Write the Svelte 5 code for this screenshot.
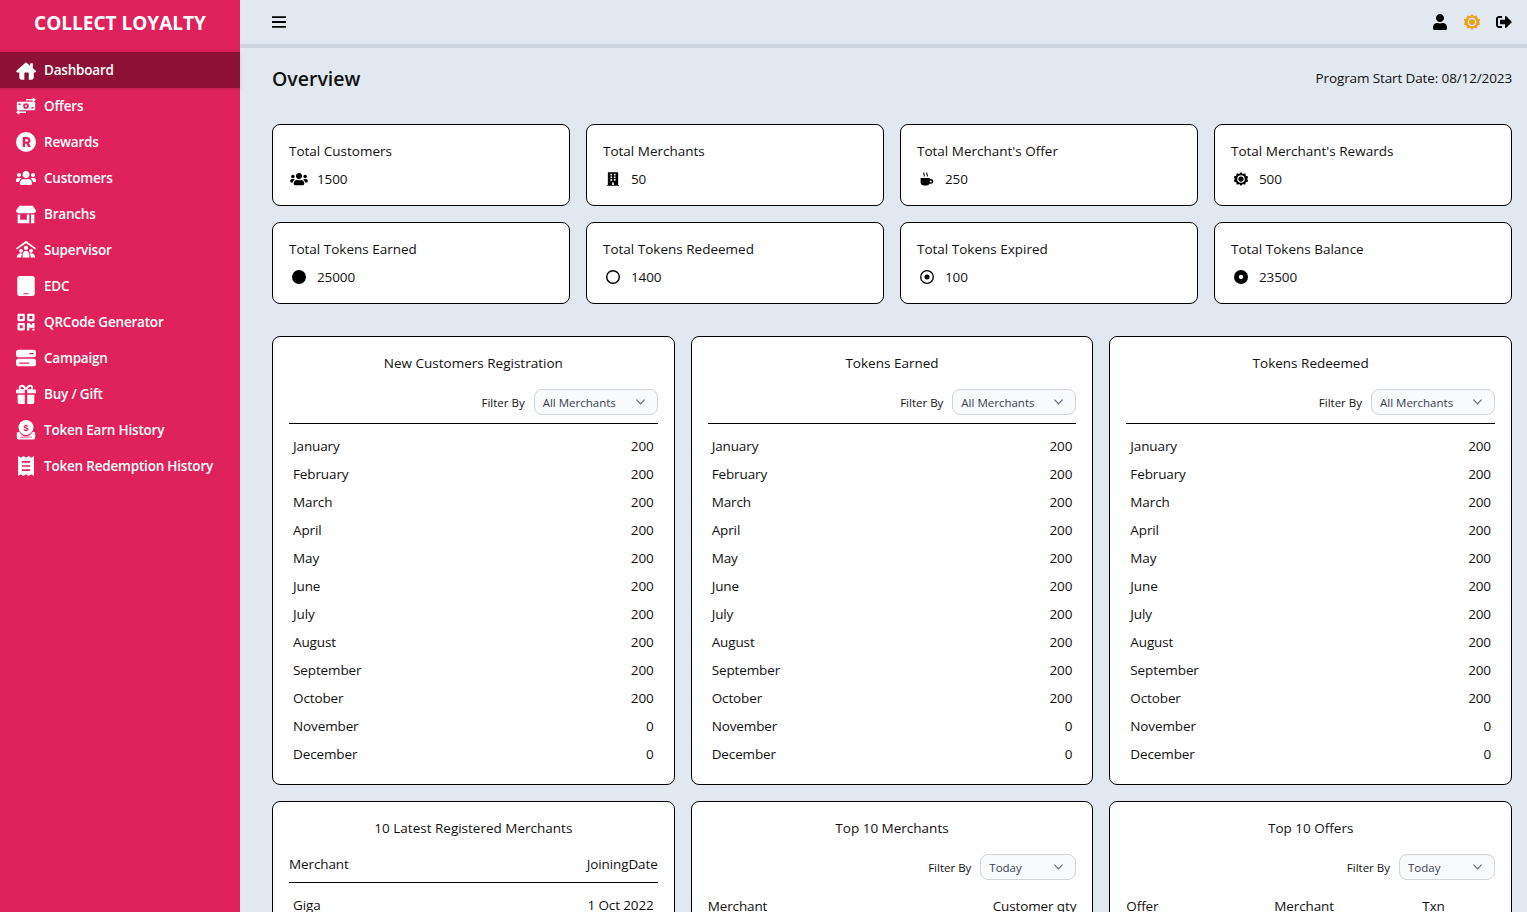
<script>
  const icons = {
    home: ['0 0 576 512', '<path d="M288 28c9 0 17 3 24 9l94 82V60c0-9 7-16 16-16h48c9 0 16 7 16 16v128l78 68c8 7 12 16 12 24 0 18-15 32-32 32h-32v144c0 35-29 64-64 64h-80V344c0-18-14-32-32-32h-64c-18 0-32 14-32 32v176h-80c-35 0-64-29-64-64V312H40c-18 0-32-14-32-32 0-8 4-17 12-24L264 37c7-6 15-9 24-9z"/>'],
    offers: ['0 0 24 24', '<rect x="1" y="7" width="22" height="10" rx="1"/><circle cx="12" cy="12" r="3.400" fill="#e0225c"/><circle cx="12" cy="12" r="1.200"/><rect x="3" y="9" width="2.500" height="1.800" fill="#e0225c"/><rect x="18.500" y="13.200" width="2.500" height="1.800" fill="#e0225c"/><path d="M12 3.700h8V1.500l4 3-4 3V5.300h-8zM12 20.300H4v2.200l-4-3 4-3v2.200h8z"/>'],
    rewards: ['0 0 24 24', '<circle cx="12" cy="12" r="12"/><path fill="#e0225c" fill-rule="evenodd" d="M8 6h5.500a4 4 0 0 1 2 7.400L18 18h-3.400l-2.200-4H11v4H8zm3 2.600V11.500h2.300a1.450 1.450 0 0 0 0-2.900z"/>'],
    users: ['0 0 640 512', '<path d="M96 224c35.300 0 64-28.700 64-64s-28.700-64-64-64-64 28.700-64 64 28.700 64 64 64zm448 0c35.300 0 64-28.700 64-64s-28.700-64-64-64-64 28.700-64 64 28.700 64 64 64zm32 32h-64c-17.600 0-33.500 7.100-45.100 18.600 40.300 22.100 68.900 62 75.100 109.400h66c17.700 0 32-14.300 32-32v-32c0-35.300-28.700-64-64-64zm-256 0c61.900 0 112-50.100 112-112S381.900 32 320 32 208 82.100 208 144s50.100 112 112 112zm76.800 32h-8.300c-20.800 10-43.900 16-68.500 16s-47.600-6-68.500-16h-8.300C179.600 288 128 339.600 128 403.200V432c0 26.500 21.500 48 48 48h288c26.500 0 48-21.500 48-48v-28.800c0-63.600-51.600-115.200-115.200-115.200zm-223.700-13.400C161.500 263.100 145.600 256 128 256H64c-35.300 0-64 28.700-64 64v32c0 17.700 14.300 32 32 32h65.900c6.300-47.400 34.900-87.300 75.200-109.400z"/>'],
    store: ['0 0 24 24', '<path d="M4 2h16l3.800 5.500c.4 2-.8 3.500-2.800 3.500H3C1 11-.2 9.500.2 7.500z"/><path d="M2 12.500h3V19h8v-6.500h3V23H2zM18 12.500h4V23h-4z"/>'],
    supervisor: ['0 0 24 24', '<path d="M12 1L0 10l1 1.500L12 4l11 7.500 1-1.500z"/><circle cx="12" cy="9.500" r="2.500"/><circle cx="6" cy="13" r="2.300"/><circle cx="18" cy="13" r="2.300"/><path d="M8 18c0-3 2-5 4-5s4 2 4 5v3H8z"/><path d="M1 21c0-3 2-5 5-5l1.500.4C6.500 18 6.500 19.500 6.500 21zM23 21c0-3-2-5-5-5l-1.500.4c1 1.600 1 3.100 1 4.600z"/>'],
    edc: ['0 0 24 24', '<path fill-rule="evenodd" d="M4.500 0h15a3 3 0 0 1 3 3v18a3 3 0 0 1-3 3h-15a3 3 0 0 1-3-3V3a3 3 0 0 1 3-3zm4.500 20.800v1.200h6v-1.200z"/>'],
    qr: ['-1.500 -1 27 26', '<path fill-rule="evenodd" d="M2.500 1h6a2 2 0 0 1 2 2v6a2 2 0 0 1-2 2h-6a2 2 0 0 1-2-2V3a2 2 0 0 1 2-2zm1 3v4h4V4zM15.500 1h6a2 2 0 0 1 2 2v6a2 2 0 0 1-2 2h-6a2 2 0 0 1-2-2V3a2 2 0 0 1 2-2zm1 3v4h4V4zM2.500 13.500h6a2 2 0 0 1 2 2v6a2 2 0 0 1-2 2h-6a2 2 0 0 1-2-2v-6a2 2 0 0 1 2-2zm1 3v4h4v-4zM13.500 13.500h3l3 3 1-3h3V20h-3v-1l-2 1.500-2-1.500v4.500h-3zM20.500 21h3v2.500h-3z"/>'],
    campaign: ['0 0 24 24', '<path fill-rule="evenodd" d="M3 2h18a3 3 0 0 1 3 3v3a3 3 0 0 1-3 3H3a3 3 0 0 1-3-3V5a3 3 0 0 1 3-3zm13 4v1.500h5V6zM3 13h18a3 3 0 0 1 3 3v3a3 3 0 0 1-3 3H3a3 3 0 0 1-3-3v-3a3 3 0 0 1 3-3zm1 4.500V19h12v-1.500z"/>'],
    gift: ['0 0 24 24', '<path fill-rule="evenodd" d="M7 1c2.200 0 3.900 1.500 5 3.500C13.100 2.500 14.800 1 17 1a3.500 3.500 0 0 1 3 5.500h2.500A1.500 1.500 0 0 1 24 8v3H13.500V7h-3v4H0V8a1.500 1.500 0 0 1 1.500-1.500H4A3.500 3.500 0 0 1 7 1zm0 2.400a1.300 1.300 0 0 0 0 2.900h3C9.300 4.600 8.200 3.400 7 3.400zm10 0c-1.200 0-2.300 1.200-3 2.900h3a1.300 1.300 0 0 0 0-2.900z"/><path d="M2 13h8.500v11H4a2 2 0 0 1-2-2zM13.500 13H22v9a2 2 0 0 1-2 2h-6.500z"/>'],
    earn: ['0 0 24 24', '<circle cx="12" cy="9" r="9"/><path d="M1 15l3-1c1 2.500 4 5.500 8 5.500s7-3 8-5.500l3 1v6c0 1.500-1 2.500-2.500 2.500h-17C2 23.500 1 22.500 1 21zm4 5v1h14v-1z" fill-rule="evenodd"/><text x="12" y="13" font-size="11" font-weight="700" text-anchor="middle" fill="#e0225c" font-family="Liberation Sans, sans-serif">$</text>'],
    receipt: ['0 0 24 24', '<path fill-rule="evenodd" d="M2.500 0l3.200 2 3.100-2L12 2l3.200-2 3.100 2 3.200-2v24l-3.200-2-3.100 2-3.200-2-3.200 2-3.100-2-3.200 2zm4.500 6v2h10V6zm0 5v2h10v-2zm0 5v2h10v-2z"/>'],
    building: ['0 0 448 512', '<path d="M436 480h-20V24c0-13.255-10.745-24-24-24H56C42.745 0 32 10.745 32 24v456H12c-6.627 0-12 5.373-12 12v20h448v-20c0-6.627-5.373-12-12-12zM128 76c0-6.627 5.373-12 12-12h40c6.627 0 12 5.373 12 12v40c0 6.627-5.373 12-12 12h-40c-6.627 0-12-5.373-12-12V76zm0 96c0-6.627 5.373-12 12-12h40c6.627 0 12 5.373 12 12v40c0 6.627-5.373 12-12 12h-40c-6.627 0-12-5.373-12-12v-40zm52 148h-40c-6.627 0-12-5.373-12-12v-40c0-6.627 5.373-12 12-12h40c6.627 0 12 5.373 12 12v40c0 6.627-5.373 12-12 12zm76 160h-64v-84c0-6.627 5.373-12 12-12h40c6.627 0 12 5.373 12 12v84zm64-172c0 6.627-5.373 12-12 12h-40c-6.627 0-12-5.373-12-12v-40c0-6.627 5.373-12 12-12h40c6.627 0 12 5.373 12 12v40zm0-96c0 6.627-5.373 12-12 12h-40c-6.627 0-12-5.373-12-12v-40c0-6.627 5.373-12 12-12h40c6.627 0 12 5.373 12 12v40zm0-96c0 6.627-5.373 12-12 12h-40c-6.627 0-12-5.373-12-12V76c0-6.627 5.373-12 12-12h40c6.627 0 12 5.373 12 12v40z"/>'],
    coffee: ['1.500 1 22 23', '<path d="M2 11h15v1.500h2a4 4 0 0 1 0 8h-2.400A5 5 0 0 1 12 23H7a5 5 0 0 1-5-5z"/><circle cx="18.700" cy="16.500" r="1.600" fill="#fff"/><path d="M6 2h1.700c.3 2 1.300 3 1.300 6.500H7.300C7.300 5.500 6.300 4.500 6 2zM11 2h1.700c.3 2 1.300 3 1.300 6.500h-1.700c0-3-1-4-1.300-6.500z"/>'],
    sun: ['0 0 24 24', '<path fill-rule="evenodd" d="M12 0l3 3.500 4.300-1.400.9 4.500 4.300 1.400-1.800 4 1.800 4-4.300 1.400-.9 4.500-4.300-1.400L12 24l-3-3.500-4.300 1.400-.9-4.500-4.300-1.400 1.800-4-1.800-4 4.300-1.400.9-4.500L9 3.500zm0 5.500a6.500 6.500 0 1 0 0 13 6.500 6.500 0 0 0 0-13z"/><circle cx="12" cy="12" r="4.500"/>'],
    disc: ['0 0 24 24', '<circle cx="12" cy="12" r="12"/>'],
    ring: ['0 0 24 24', '<circle cx="12" cy="12" r="10.800" fill="none" stroke="currentColor" stroke-width="2.400"/>'],
    target: ['0 0 24 24', '<circle cx="12" cy="12" r="10.800" fill="none" stroke="currentColor" stroke-width="2.200"/><circle cx="12" cy="12" r="4.300"/>'],
    donut: ['0 0 24 24', '<path fill-rule="evenodd" d="M12 0a12 12 0 1 0 0 24 12 12 0 0 0 0-24zm0 8.300a3.700 3.700 0 1 1 0 7.400 3.700 3.700 0 0 1 0-7.400z"/>'],
    user: ['0 0 448 512', '<path d="M224 256c70.700 0 128-57.300 128-128S294.700 0 224 0 96 57.300 96 128s57.300 128 128 128zm89.600 32h-16.700c-22.200 10.200-46.900 16-72.900 16s-50.600-5.800-72.900-16h-16.700C60.200 288 0 348.200 0 422.400V464c0 26.500 21.500 48 48 48h352c26.500 0 48-21.500 48-48v-41.600c0-74.200-60.200-134.400-134.400-134.400z"/>'],
    logout: ['0 0 512 512', '<path d="M497 273L329 441c-15 15-41 4.500-41-17v-96H152c-13.300 0-24-10.700-24-24v-96c0-13.300 10.700-24 24-24h136V88c0-21.400 25.900-32 41-17l168 168c9.300 9.400 9.300 24.600 0 34zM192 436v-40c0-6.600-5.400-12-12-12H96c-17.700 0-32-14.300-32-32V160c0-17.700 14.300-32 32-32h84c6.600 0 12-5.400 12-12V76c0-6.600-5.400-12-12-12H96c-53 0-96 43-96 96v192c0 53 43 96 96 96h84c6.600 0 12-5.400 12-12z"/>']
  };

  const nav = [
    ['home', 'Dashboard'], ['offers', 'Offers'], ['rewards', 'Rewards'], ['users', 'Customers'],
    ['store', 'Branchs'], ['supervisor', 'Supervisor'], ['edc', 'EDC'], ['qr', 'QRCode Generator'],
    ['campaign', 'Campaign'], ['gift', 'Buy / Gift'], ['earn', 'Token Earn History'], ['receipt', 'Token Redemption History']
  ];

  const stats = [
    ['Total Customers', 'users', '1500', 'w20'], ['Total Merchants', 'building', '50', 'w14'],
    ["Total Merchant's Offer", 'coffee', '250', 'w16'], ["Total Merchant's Rewards", 'sun', '500', 'w16'],
    ['Total Tokens Earned', 'disc', '25000', 'w16'], ['Total Tokens Redeemed', 'ring', '1400', 'w16'],
    ['Total Tokens Expired', 'target', '100', 'w16'], ['Total Tokens Balance', 'donut', '23500', 'w16']
  ];

  const months = ['January','February','March','April','May','June','July','August','September','October','November','December'];
  const monthCards = ['New Customers Registration', 'Tokens Earned', 'Tokens Redeemed'];
</script>

{#snippet icon(name, cls)}
  <svg class={cls} viewBox={icons[name][0]} fill="currentColor" aria-hidden="true">{@html icons[name][1]}</svg>
{/snippet}

{#snippet filter(label, wide)}
  <div class="filter">
    <span class="filter-label">Filter By</span>
    <div class="select" class:wide>
      <span>{label}</span>
      <svg class="chev" viewBox="0 0 12 12" fill="none" stroke="#6b7280" stroke-width="1.300"><path d="M1.500 4l4.500 4.500L10.500 4"/></svg>
    </div>
  </div>
{/snippet}

<div class="app">
  <aside class="sidebar">
    <div class="brand">COLLECT LOYALTY</div>
    <nav>
      {#each nav as [ic, label], i}
        <div class="nav-item" class:active={i === 0}>
          <span class="nav-icon">{@render icon(ic, ic === 'home' ? 'i-home' : ic === 'users' ? 'i-users' : 'i-nav')}</span>
          <span>{label}</span>
        </div>
      {/each}
    </nav>
  </aside>

  <div class="page">
    <header class="topbar">
      <svg class="burger" viewBox="0 0 14 12" fill="none" stroke="#000" stroke-width="1.800"><path d="M0 1.200h14M0 6h14M0 10.800h14"/></svg>
      <div class="top-actions">
        <span class="t-user">{@render icon('user', 'i-top')}</span>
        <span class="t-sun">{@render icon('sun', 'i-top')}</span>
        <span class="t-out">{@render icon('logout', 'i-top')}</span>
      </div>
    </header>

    <main>
      <div class="title-row">
        <h1>Overview</h1>
        <span class="start">Program Start Date: 08/12/2023</span>
      </div>

      <section class="stats">
        {#each stats as [title, ic, value, w]}
          <div class="card stat">
            <div class="stat-title">{title}</div>
            <div class="stat-value">
              <span class="stat-icon">{@render icon(ic, w)}</span>
              <span>{value}</span>
            </div>
          </div>
        {/each}
      </section>

      <section class="tables">
        {#each monthCards as title}
          <div class="card panel">
            <div class="panel-title">{title}</div>
            {@render filter('All Merchants', true)}
            <div class="rule"></div>
            <div class="rows">
              {#each months as m, i}
                <div class="row"><span>{m}</span><span>{i < 10 ? 200 : 0}</span></div>
              {/each}
            </div>
          </div>
        {/each}

        <div class="card panel">
          <div class="panel-title">10 Latest Registered Merchants</div>
          <div class="head-row first"><span>Merchant</span><span>JoiningDate</span></div>
          <div class="rule"></div>
          <div class="row giga"><span>Giga</span><span>1 Oct 2022</span></div>
        </div>

        <div class="card panel">
          <div class="panel-title">Top 10 Merchants</div>
          {@render filter('Today', false)}
          <div class="head-row low"><span>Merchant</span><span>Customer qty</span></div>
        </div>

        <div class="card panel">
          <div class="panel-title">Top 10 Offers</div>
          {@render filter('Today', false)}
          <div class="head-row low three"><span>Offer</span><span>Merchant</span><span>Txn</span></div>
        </div>
      </section>
    </main>
  </div>
</div>

<style>
  :global(body) {
    margin: 0;
    background: #e2e8f0;
    overflow: hidden;
  }
  .app {
    display: flex;
    height: 912px;
    overflow: hidden;
    font-family: "Open Sans", "Noto Sans", sans-serif;
    color: #111;
    font-size: 13.500px;
    letter-spacing: -0.120px;
  }
  .sidebar {
    width: 240px;
    flex: none;
    background: #e0225c;
    color: #fff;
  }
  .brand {
    height: 52px;
    padding-bottom: 6px;
    box-sizing: border-box;
    display: flex;
    align-items: center;
    justify-content: center;
    font-size: 19px;
    font-weight: 700;
    letter-spacing: 0;
  }
  .nav-item {
    height: 36px;
    display: flex;
    align-items: center;
    padding-left: 16px;
    font-size: 13.500px;
    font-weight: 600;
    letter-spacing: -0.200px;
  }
  .nav-item.active {
    background: #8f1037;
    box-shadow: 0 1px 3px rgba(0, 0, 0, 0.15);
  }
  .nav-icon {
    width: 20px;
    margin-right: 8px;
    display: flex;
    justify-content: center;
    align-items: center;
  }
  .i-nav { width: 20px; height: 20px; }
  .i-home { width: 21px; height: 19px; }
  .i-users { width: 20px; height: 16px; }
  .page {
    flex: 1;
    min-width: 0;
    display: flex;
    flex-direction: column;
  }
  .topbar {
    height: 44px;
    flex: none;
    border-bottom: 4px solid #cbd5e1;
    display: flex;
    align-items: center;
    justify-content: space-between;
    padding: 0 15px 0 32px;
  }
  .burger { width: 14px; height: 12px; }
  .top-actions {
    display: flex;
    align-items: center;
    gap: 16px;
  }
  .top-actions span { width: 16px; height: 16px; display: flex; justify-content: center; }
  .i-top { height: 16px; width: 16px; }
  .t-user { color: #000; }
  .t-sun { color: #eca31c; }
  .t-out { color: #000; }
  main {
    padding: 0 15px 0 32px;
  }
  .title-row {
    height: 76px;
    display: flex;
    align-items: flex-start;
    justify-content: space-between;
  }
  h1 {
    margin: 17px 0 0;
    font-size: 19.500px;
    line-height: 27px;
    font-weight: 600;
    letter-spacing: 0;
    color: #111;
  }
  .start {
    margin-top: 20px;
    line-height: 20px;
  }
  .card {
    box-sizing: border-box;
    background: #fff;
    border: 1px solid #000;
    border-radius: 8px;
  }
  .stats {
    display: grid;
    grid-template-columns: repeat(4, minmax(0, 1fr));
    gap: 16px;
  }
  .stat {
    height: 82px;
    padding: 16px;
  }
  .stat-title {
    font-weight: 500;
    line-height: 20px;
    letter-spacing: 0;
  }
  .stat-value {
    margin-top: 8px;
    display: flex;
    align-items: center;
    line-height: 20px;
  }
  .stat-icon {
    width: 18px;
    margin: 0 9px 0 1px;
    display: flex;
    justify-content: center;
    color: #000;
  }
  .w20 { width: 18px; height: 14px; }
  .w14 { width: 12px; height: 14px; }
  .w16 { width: 14px; height: 14px; }
  .tables {
    margin-top: 32px;
    display: grid;
    grid-template-columns: repeat(3, minmax(0, 1fr));
    gap: 16px;
  }
  .panel {
    padding: 16px;
    min-height: 449px;
  }
  .panel:nth-child(n + 4) { min-height: 300px; }
  .panel-title {
    text-align: center;
    font-weight: 500;
    line-height: 20px;
    letter-spacing: 0;
  }
  .filter {
    margin-top: 16px;
    height: 26px;
    display: flex;
    align-items: center;
    justify-content: flex-end;
    gap: 9px;
  }
  .filter-label {
    font-size: 11.500px;
    font-weight: 500;
    letter-spacing: 0;
  }
  .select {
    box-sizing: border-box;
    width: 96px;
    height: 26px;
    background: #f9fafb;
    border: 1px solid #d1d5db;
    border-radius: 8px;
    padding: 0 11px 0 8px;
    display: flex;
    align-items: center;
    justify-content: space-between;
    font-size: 11.500px;
    letter-spacing: 0;
    color: #374151;
  }
  .select.wide { width: 124px; }
  .chev { width: 11px; height: 11px; margin-top: -2px; }
  .rule {
    margin-top: 8px;
    border-top: 1px solid #000;
  }
  .rows { margin-top: 8px; }
  .row {
    height: 28px;
    padding: 0 4px;
    display: flex;
    align-items: center;
    justify-content: space-between;
    line-height: 20px;
  }
  .head-row {
    display: flex;
    justify-content: space-between;
    line-height: 20px;
  }
  .head-row.first { margin-top: 16px; }
  .giga { margin-top: 8px; }
  .head-row.low { margin-top: 16px; }
  .head-row.three {
    display: grid;
    grid-template-columns: 148px 148px minmax(0, 1fr);
  }
</style>
